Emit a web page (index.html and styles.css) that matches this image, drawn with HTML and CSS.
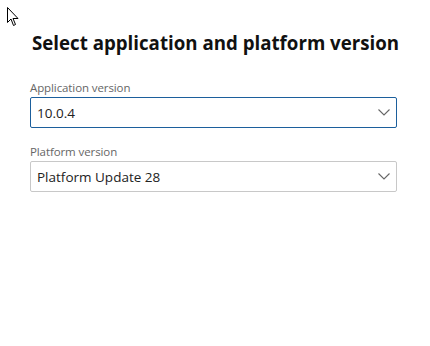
FILE: index.html
```html
<!DOCTYPE html>
<html lang="en">

<head>
	<meta charset="UTF-8">
	<meta name="viewport" content="width=device-width, initial-scale=1.0">
	<title>Select version</title>
	<link rel="stylesheet" href="styles.css">
</head>

<body>

	<svg class="cursor" width="12" height="20" viewBox="0 0 12 20">
		<path d="M0.5 0.5 L0.5 15.5 L4 12 L6.5 18.5 L8.5 17.5 L6 11.5 L11 11.5 Z" fill="#fff" stroke="#000" stroke-width="1" stroke-linejoin="miter" />
	</svg>

	<div class="panel">
		<h1>Select application and platform version</h1>

		<div class="field">
			<label>Application version</label>
			<div class="dropdown focused">
				<span>10.0.4</span>
				<svg class="chevron" width="12" height="7" viewBox="0 0 12 7">
					<path d="M0.5 0.5 L6 6 L11.5 0.5" fill="none" stroke="#666" stroke-width="1.1" />
				</svg>
			</div>
		</div>

		<div class="field">
			<label>Platform version</label>
			<div class="dropdown">
				<span>Platform Update 28</span>
				<svg class="chevron" width="12" height="7" viewBox="0 0 12 7">
					<path d="M0.5 0.5 L6 6 L11.5 0.5" fill="none" stroke="#666" stroke-width="1.1" />
				</svg>
			</div>
		</div>
	</div>

</body>

</html>
```
FILE: styles.css
```css
*,
*::before,
*::after {
	box-sizing: border-box;
}

body {
	margin: 0;
	padding: 0;
	font-family: "Open Sans", "Noto Sans", sans-serif;
	background-color: white;
	color: #222;
}

.cursor {
	position: absolute;
	top: 7px;
	left: 7px;
}

.panel {
	width: 367px;
	margin-left: 30px;
	padding-top: 30px;
}

h1 {
	margin: 0 0 24px 2px;
	font-size: 18.7px;
	line-height: 26px;
	font-weight: 700;
	color: #111;
	white-space: nowrap;
}

.field {
	margin-bottom: 16px;
}

label {
	display: block;
	font-size: 11.5px;
	line-height: 16px;
	color: #666;
	margin-bottom: 1px;
	letter-spacing: -0.1px;
}

.dropdown {
	height: 31px;
	border: 1px solid #c8c8c8;
	border-radius: 2px;
	display: flex;
	align-items: center;
	justify-content: space-between;
	padding: 0 6px 0 6px;
	font-size: 13.5px;
	color: #222;
}

.dropdown.focused {
	border-color: #1c5f9c;
}

.chevron {
	margin-right: 0;
}
```
